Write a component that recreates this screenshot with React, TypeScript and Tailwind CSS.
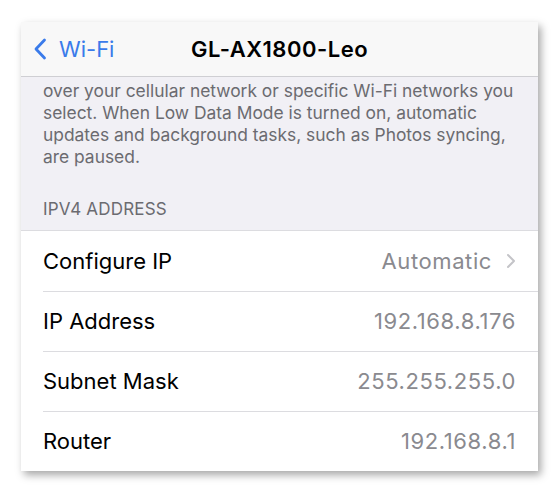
import React from "react";

const rows = [
  { label: "Configure IP", value: "Automatic", chevron: true },
  { label: "IP Address", value: "192.168.8.176" },
  { label: "Subnet Mask", value: "255.255.255.0" },
  { label: "Router", value: "192.168.8.1" },
];

const App = () => {
  return (
    <div
      className="w-[559px] h-[494px] bg-white pt-[22px] pl-[21px]"
      style={{ fontFamily: "Inter, 'Liberation Sans', sans-serif" }}
    >
      <div className="w-[517px] h-[449px] flex flex-col overflow-hidden bg-[#f1f0f5] shadow-[3px_4px_8px_rgba(0,0,0,0.35)]">
        {/* Nav bar */}
        <div className="relative h-[55px] shrink-0 flex items-center bg-[#f8f8f8] border-b border-[#cfcfd3]">
          <div className="flex items-center pl-[12px] text-[#3a7bea]">
            <svg width="14" height="22" viewBox="0 0 14 22" fill="none">
              <path
                d="M11.5 2 L3 11 L11.5 20"
                stroke="currentColor"
                strokeWidth="2.8"
                strokeLinecap="round"
                strokeLinejoin="round"
              />
            </svg>
            <span className="ml-[12px] text-[22px] leading-none">Wi-Fi</span>
          </div>
          <div className="absolute inset-0 flex items-center justify-center pointer-events-none">
            <span className="text-[22px] font-semibold text-black tracking-[0.5px]">
              GL-AX1800-Leo
            </span>
          </div>
        </div>

        {/* Scroll area */}
        <div className="flex-1 overflow-hidden flex flex-col">
          <p className="mt-[3px] px-[22px] text-[17.4px] leading-[22px] text-[#6b6b70] whitespace-nowrap">
            over your cellular network or specific Wi-Fi networks you
            <br />
            select. When Low Data Mode is turned on, automatic
            <br />
            updates and background tasks, such as Photos syncing,
            <br />
            are paused.
          </p>
          <div className="mt-[32px] px-[22px] h-[20px] flex items-center text-[17px] text-[#6b6b70] tracking-[0.2px]">
            IPV4 ADDRESS
          </div>
          <div className="mt-[10px] bg-white border-t border-[#dcdce0]">
            {rows.map((row, i) => (
              <div key={row.label} className="pl-[22px]">
                <div
                  className={
                    "h-[60px] flex items-center justify-between pr-[22px] " +
                    (i > 0 ? "border-t border-[#dcdce0]" : "")
                  }
                >
                  <span className="text-[22px] text-black">{row.label}</span>
                  <span className="flex items-center text-[22px] text-[#8a8a8f] tracking-[0.6px]">
                    {row.value}
                    {row.chevron && (
                      <svg className="ml-[14px]" width="10" height="16" viewBox="0 0 10 16" fill="none">
                        <path
                          d="M2 2 L8 8 L2 14"
                          stroke="#c4c4c8"
                          strokeWidth="2"
                          strokeLinecap="round"
                          strokeLinejoin="round"
                        />
                      </svg>
                    )}
                  </span>
                </div>
              </div>
            ))}
          </div>
        </div>
      </div>
    </div>
  );
};

export default App;
